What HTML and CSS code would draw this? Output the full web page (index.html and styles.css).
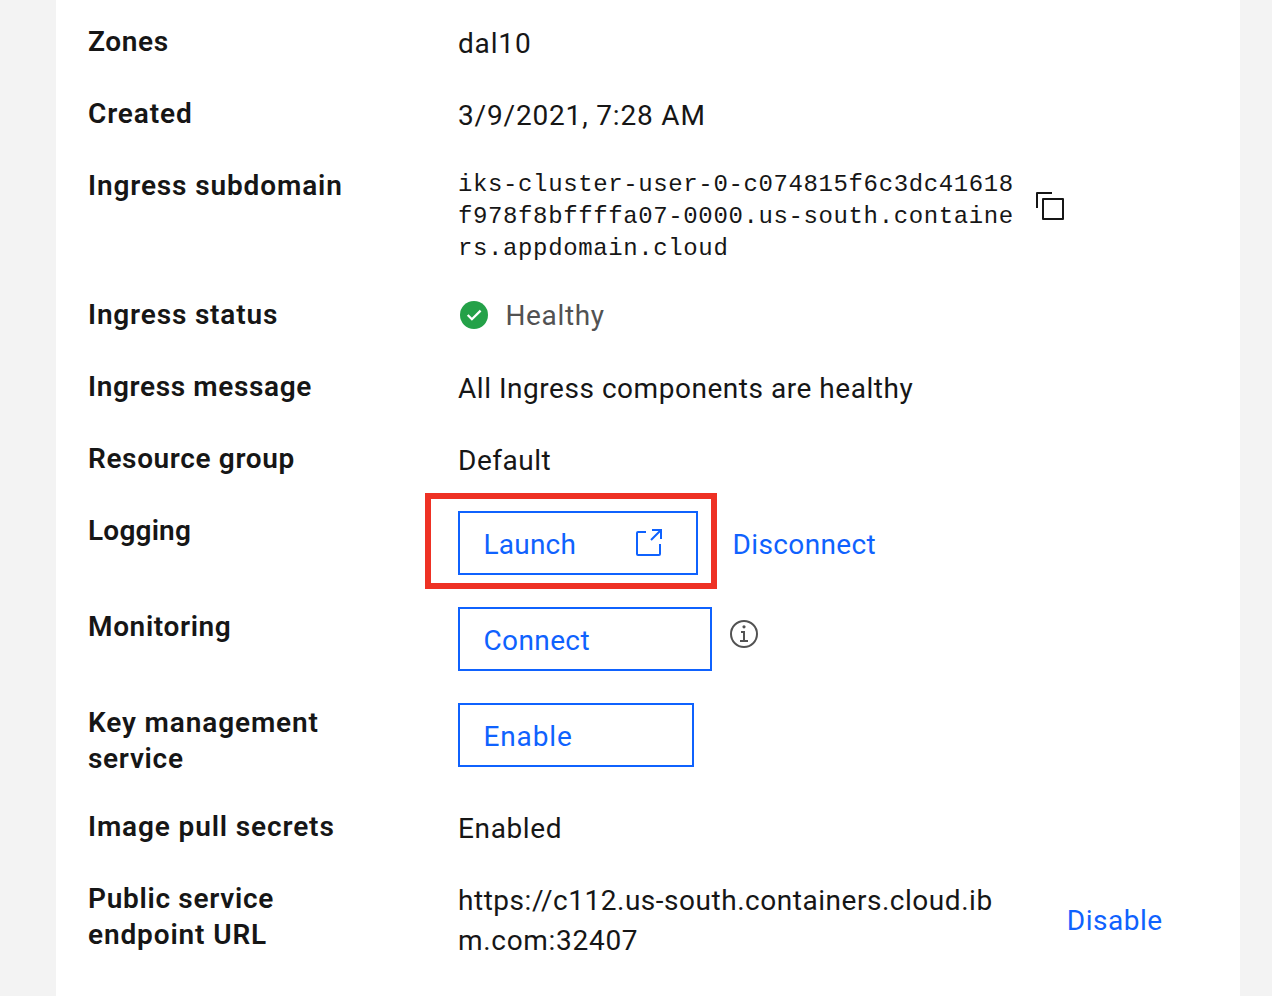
FILE: index.html
```
<!DOCTYPE html>
<html lang="en">
<head>
<meta charset="utf-8">
<title>Cluster details</title>
<link rel="stylesheet" href="styles.css">
</head>
<body>
<main class="panel">
<dl class="details">
<dt class="ls-6">Zones</dt>
<dd class="ls-8">dal10</dd>

<dt class="ls-9">Created</dt>
<dd class="ls-8">3/9/2021, 7:28 AM</dd>

<dt class="ls-9">Ingress subdomain</dt>
<dd class="subdomain">
  <code>iks-cluster-user-0-c074815f6c3dc41618<br>f978f8bffffa07-0000.us-south.containe<br>rs.appdomain.cloud</code>
  <svg class="copy" width="28" height="28" viewBox="0 0 28 28" fill="none" stroke="currentColor" stroke-width="2" stroke-linejoin="round"><path d="M1 16V1h15"/><rect x="7" y="7" width="20" height="20"/></svg>
</dd>

<dt class="ls-8">Ingress status</dt>
<dd class="status ls-6">
  <svg width="28" height="28" viewBox="0 0 28 28" fill="none"><circle cx="14" cy="14" r="14" fill="#24a148"/><path d="M7.7 14l4.2 4.2 8.7-8.6" stroke="#fff" stroke-width="2.3"/></svg>
  <span>Healthy</span>
</dd>

<dt class="ls-6">Ingress message</dt>
<dd class="ls-5">All Ingress components are healthy</dd>

<dt class="ls-6">Resource group</dt>
<dd class="ls-5">Default</dd>

<dt class="ls-2">Logging</dt>
<dd class="actions">
  <button class="btn launch ls-3">Launch
    <svg width="28" height="28" viewBox="0 0 28 28" fill="none" stroke="currentColor" stroke-width="2"><path d="M12 4H4a1 1 0 0 0-1 1v21a1 1 0 0 0 1 1h21a1 1 0 0 0 1-1V16" stroke-linejoin="round"/><path d="M18 2h9v9M27 2L17 12"/></svg>
  </button>
  <a class="link ls-4">Disconnect</a>
</dd>

<dt class="ls-6">Monitoring</dt>
<dd class="actions">
  <button class="btn connect ls-4">Connect</button>
  <svg class="info" width="28" height="28" viewBox="0 0 28 28" fill="none" stroke="currentColor" stroke-width="2"><circle cx="14" cy="14" r="13"/><path d="M11 12h3V20.5M10 21h8"/><circle cx="14" cy="6.8" r="1.6" fill="currentColor" stroke="none"/></svg>
</dd>

<dt class="ls-9">Key management<br><span class="ls-7">service</span></dt>
<dd class="actions"><button class="btn enable ls-9">Enable</button></dd>

<dt class="ls-9">Image pull secrets</dt>
<dd class="ls-6">Enabled</dd>

<dt class="ls-7">Public service<br><span class="ls-9">endpoint URL</span></dt>
<dd class="endpoint">
  <div class="ls-5">https://c112.us-south.containers.cloud.ib<br><span class="ls-7">m.com:32407</span></div>
  <a class="link ls-5">Disable</a>
</dd>
</dl>
<div class="highlight"></div>
</main>
</body>
</html>
```

FILE: styles.css
```
* { box-sizing: border-box; }
body {
  margin: 0;
  background: #f3f3f3;
  color: #161616;
  font-family: Roboto, sans-serif;
  font-size: 28px;
  overflow: hidden;
}
.panel {
  height: 996px;
  margin: 0 32px 0 56px;
  padding: 24px 32px 0;
  background: #fff;
}
.details {
  display: grid;
  grid-template-columns: 370px 1fr;
  grid-template-rows: 72px 72px 129px 72px 72px 72px 96px 96px 104px 72px 1fr;
  margin: 0;
}
dt { font-weight: 600; line-height: 36px; }
dd { margin: 0; line-height: 40px; white-space: nowrap; }

.subdomain { display: flex; gap: 22px; }
.subdomain code {
  width: 556px;
  padding-top: 1px;
  font-family: "Liberation Mono", monospace;
  font-size: 24px;
  line-height: 32px;
  letter-spacing: 0.62px;
}
.copy { margin-top: 24px; }

.status { display: flex; align-items: flex-start; gap: 17.5px; padding-left: 2px; color: #525252; }
.status svg { margin-top: 4px; }
.status span { margin-top: -1px; }

.actions { display: flex; align-items: flex-start; margin-top: -2px; }
.btn {
  display: flex;
  align-items: center;
  justify-content: space-between;
  height: 64px;
  padding: 4px 34px 0 23.5px;
  border: 2px solid #0f62fe;
  background: #fff;
  color: #0f62fe;
  font: inherit;
}
.btn svg { margin-top: -6px; }
.launch { width: 240px; }
.connect { width: 254px; }
.enable { width: 236px; }
.link { color: #0f62fe; }
.actions .link { margin: 14px 0 0 34.5px; }
.info { margin: 13px 0 0 18px; color: #525252; }

.endpoint { display: flex; }
.endpoint div { width: 608.8px; }
.endpoint .link { margin-top: 20px; }

.highlight {
  position: absolute;
  left: 424.5px;
  top: 492.5px;
  width: 292.5px;
  height: 96.5px;
  border: 6px solid #ee3124;
}

.ls-2 { letter-spacing: 0.2px; }
.ls-3 { letter-spacing: 0.22px; }
.ls-4 { letter-spacing: 0.38px; }
.ls-5 { letter-spacing: 0.53px; }
.ls-6 { letter-spacing: 0.63px; }
.ls-7 { letter-spacing: 0.7px; }
.ls-8 { letter-spacing: 0.83px; }
.ls-9 { letter-spacing: 0.87px; }
```
